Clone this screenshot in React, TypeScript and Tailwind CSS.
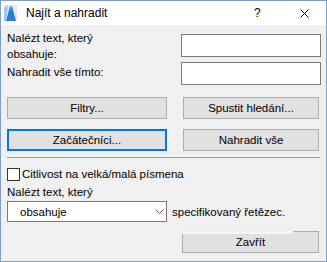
import React from "react"

const AppIcon = () => (
    <svg width="13" height="16" viewBox="0 0 13 16" className="shrink-0">
        <rect x="0" y="0" width="13" height="16" fill="#e4eaf1" />
        <polygon points="0,16 0,3 4,0 2,16" fill="#9cc8f2" />
        <polygon points="2,16 6,1 8,1 12,16" fill="#2b7bd8" />
        <polygon points="6,1 8,1 7,6" fill="#6aa9ea" />
    </svg>
)

const Button = ({ label, focused }: { label: string; focused?: boolean }) => (
    <div
        className={
            focused
                ? "h-[22px] flex items-center justify-center bg-[#e1e1e1] border-2 border-[#0078d7]"
                : "h-[22px] flex items-center justify-center bg-[#e1e1e1] border border-[#adadad]"
        }
    >
        {label}
    </div>
)

const App = () => {
    return (
        <div className="w-[327px] h-[262px] border border-[#7ea0c8] bg-[#f0f0f0] flex flex-col font-['Liberation_Sans',Arial,sans-serif] text-[11.5px] leading-[16px] text-black overflow-hidden">
            {/* title bar */}
            <div className="h-[24px] bg-white flex items-center pl-[3px] pr-[17px] shrink-0">
                <AppIcon />
                <span className="ml-[9px] text-[12px]">Najít a nahradit</span>
                <div className="flex-1" />
                <span className="w-[7px] text-[12px]">?</span>
                <svg width="9" height="9" viewBox="0 0 9 9" className="ml-[39px]">
                    <path d="M0.5 0.5 L8.5 8.5 M8.5 0.5 L0.5 8.5" stroke="#000" strokeWidth="1" />
                </svg>
            </div>

            <div className="flex-1 flex flex-col pl-[6px] pr-[5px] pt-[5px]">
                <div className="flex items-start">
                    <div className="flex-1">
                        <div>Nalézt text, který</div>
                        <div>obsahuje:</div>
                    </div>
                    <div className="mt-[4px] w-[140px] h-[23px] bg-white border border-[#7a7a7a]" />
                </div>
                <div className="flex items-start">
                    <div className="flex-1 mt-[2px]">Nahradit vše tímto:</div>
                    <div className="w-[140px] h-[23px] bg-white border border-[#7a7a7a]" />
                </div>

                <div className="mt-[12px] flex gap-[16px] pr-[2px]">
                    <div className="w-[160px]"><Button label="Filtry..." /></div>
                    <div className="flex-1"><Button label="Spustit hledání..." /></div>
                </div>
                <div className="mt-[10px] flex gap-[16px] pr-[2px]">
                    <div className="w-[160px]"><Button label="Začátečníci..." focused /></div>
                    <div className="flex-1"><Button label="Nahradit vše" /></div>
                </div>

                <div className="mt-[6px] h-[1px] bg-[#a0a0a0] mr-[1px]" />

                <div className="mt-[8px] flex items-center">
                    <div className="w-[13px] h-[13px] bg-white border border-[#333333]" />
                    <span className="ml-[2px]">Citlivost na velká/malá písmena</span>
                </div>

                <div className="mt-[2px]">Nalézt text, který</div>

                <div className="mt-[1px] flex items-center">
                    <div className="w-[160px] h-[21px] bg-white border border-[#7a7a7a] flex items-center justify-between pl-[12px] pr-[2px]">
                        <span>obsahuje</span>
                        <svg width="9" height="5" viewBox="0 0 9 5">
                            <path d="M0.5 0.5 L4.5 4.5 L8.5 0.5" stroke="#555555" strokeWidth="1" fill="none" />
                        </svg>
                    </div>
                    <span className="ml-[5px]">specifikovaný řetězec.</span>
                </div>

                <div className="mt-[9px] flex justify-end pr-[2px]">
                    <div className="w-[137px] h-[22px] bg-[#e1e1e1] border border-t-0 border-[#adadad] flex flex-col">
                        <div className="flex h-[3px] -mx-[1px]">
                            <div className="w-[111px] bg-[#f7f7f7]" />
                            <div className="flex-1 h-[1px] bg-[#adadad]" />
                        </div>
                        <div className="flex-1 flex items-center justify-center -mt-[2px]">Zavřít</div>
                    </div>
                </div>
            </div>
        </div>
    )
}

export default App
